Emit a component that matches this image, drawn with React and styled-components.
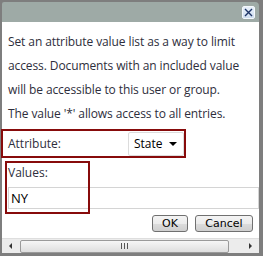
import React from "react";
import styled, { createGlobalStyle } from "styled-components";

const GlobalStyle = createGlobalStyle`
  html, body {
    margin: 0;
    padding: 0;
    background: #ffffff;
  }
`;

const Frame = styled.div`
  width: 263px;
  height: 256px;
  box-sizing: border-box;
  padding: 2px 4px 3px 2px;
  background: #7e7e7e;
  display: flex;
  flex-direction: column;
  font-family: "Open Sans", "Noto Sans", sans-serif;
`;

const TitleBar = styled.div`
  height: 20px;
  flex: none;
  background: #9eaaa6;
  border-top-left-radius: 2px;
  border-top-right-radius: 4px;
  display: flex;
  align-items: flex-start;
  justify-content: flex-end;
  padding: 4px 4px 0 0;
  box-sizing: border-box;
`;

const CloseButton = styled.button`
  width: 13px;
  height: 13px;
  padding: 0;
  border: 1px solid #f4f8fc;
  border-radius: 2px;
  background: linear-gradient(#e8f0fa, #cfdef0);
  display: flex;
  align-items: center;
  justify-content: center;
`;

const Body = styled.div`
  flex: 1;
  background: #ffffff;
  position: relative;
  display: flex;
  flex-direction: column;
`;

const Message = styled.p`
  margin: 0;
  padding: 8px 0 0 6px;
  font-size: 12px;
  line-height: 24px;
  color: #2e2e3c;
  white-space: nowrap;
  letter-spacing: -0.1px;
`;

const AttrRow = styled.div`
  margin-top: 3px;
  height: 29px;
  display: flex;
  align-items: center;
  padding-left: 6px;
`;

const Label = styled.span`
  font-size: 12px;
  color: #2e2e3c;
  width: ${(p) => p.width || "auto"};
  display: block;
`;

const Select = styled.div`
  width: 56px;
  height: 24px;
  box-sizing: border-box;
  border: 1px solid #dcdcdc;
  border-radius: 2px;
  display: flex;
  align-items: center;
  justify-content: space-between;
  padding: 0 6px 0 5px;
  font-size: 12px;
  color: #000;
`;

const Arrow = styled.span`
  width: 0;
  height: 0;
  border-left: 4px solid transparent;
  border-right: 4px solid transparent;
  border-top: 4px solid #000;
`;

const ValuesLabel = styled.div`
  height: 29px;
  padding-left: 6px;
  font-size: 12px;
  line-height: 29px;
  color: #2e2e3c;
`;

const TextInput = styled.div`
  height: 22px;
  margin-left: 6px;
  box-sizing: border-box;
  border: 1px solid #d4d4d4;
  display: flex;
  align-items: center;
  padding-left: 2px;
  font-size: 13px;
  color: #000;
`;

const ButtonRow = styled.div`
  margin-top: 6px;
  height: 17px;
  display: flex;
  justify-content: flex-end;
  gap: 7px;
  padding-right: 6px;
`;

const Button = styled.button`
  width: ${(p) => p.w}px;
  height: 17px;
  padding: 0;
  box-sizing: border-box;
  border: 1px solid #707070;
  border-radius: 3px;
  background: linear-gradient(#f4f4f4 0%, #ebebeb 50%, #dcdcdc 51%, #cfcfcf 100%);
  font-family: "DejaVu Sans", sans-serif;
  font-size: 11px;
  color: #000;
`;

const HScroll = styled.div`
  margin-top: 6px;
  height: 15px;
  background: #ececec;
  border-top: 1px solid #dedede;
  box-sizing: border-box;
  display: flex;
  align-items: center;
  padding: 0 4px 0 4px;
`;

const ScrollArrow = styled.span`
  width: 0;
  height: 0;
  border-top: 3px solid transparent;
  border-bottom: 3px solid transparent;
  ${(p) =>
    p.dir === "left"
      ? "border-right: 3px solid #333; margin: 0 8px 0 3px;"
      : "border-left: 3px solid #333; margin: 0 3px 0 auto;"}
`;

const Thumb = styled.div`
  width: 209px;
  height: 13px;
  box-sizing: border-box;
  border: 1px solid #9a9a9a;
  border-radius: 2px;
  background: linear-gradient(#f6f6f6, #dedede);
  display: flex;
  align-items: center;
  justify-content: center;
  gap: 2px;
`;

const Grip = styled.span`
  width: 1px;
  height: 6px;
  background: #555;
`;

const Highlight = styled.div`
  position: absolute;
  left: ${(p) => p.x}px;
  top: ${(p) => p.y}px;
  width: ${(p) => p.w}px;
  height: ${(p) => p.h}px;
  box-sizing: border-box;
  border: 2px solid #870b0b;
  pointer-events: none;
`;

export default function App() {
  return (
    <>
      <GlobalStyle />
      <Frame>
        <TitleBar>
          <CloseButton aria-label="Close">
            <svg width="9" height="9" viewBox="0 0 9 9">
              <path d="M1 1L8 8M8 1L1 8" stroke="#1d3466" strokeWidth="1.4" />
            </svg>
          </CloseButton>
        </TitleBar>
        <Body>
          <Message>
            Set an attribute value list as a way to limit
            <br />
            access. Documents with an included value
            <br />
            will be accessible to this user or group.
            <br />
            The value '*' allows access to all entries.
          </Message>
          <AttrRow>
            <Label width="120px">Attribute:</Label>
            <Select>
              State
              <Arrow />
            </Select>
          </AttrRow>
          <ValuesLabel>Values:</ValuesLabel>
          <TextInput>NY</TextInput>
          <ButtonRow>
            <Button w={36}>OK</Button>
            <Button w={58}>Cancel</Button>
          </ButtonRow>
          <HScroll>
            <ScrollArrow dir="left" />
            <Thumb>
              <Grip />
              <Grip />
              <Grip />
            </Thumb>
            <ScrollArrow dir="right" />
          </HScroll>
          <Highlight x={-1} y={107} w={185} h={29} />
          <Highlight x={3} y={139} w={85} h={53} />
        </Body>
      </Frame>
    </>
  );
}
